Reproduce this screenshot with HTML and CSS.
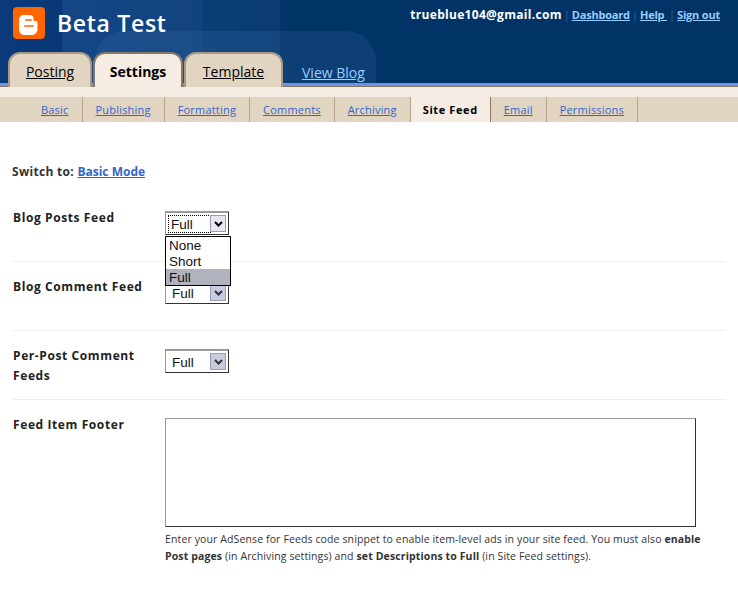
FILE: index.html
```html
<!DOCTYPE html>
<html lang="en">
<head>
  <meta charset="UTF-8" />
  <title>Blogger: Beta Test - Settings</title>
  <link rel="stylesheet" href="styles.css">
</head>
<body>
  <header class="top">
    <div class="glow glow-a"></div>
    <div class="glow glow-b"></div>
    <div class="stripe"></div>
    <div class="brand">
      <svg class="logo" width="32" height="32" viewBox="0 0 32 32">
        <rect width="32" height="32" rx="4" fill="#ff6600"/>
        <path d="M11 8h6c2 0 3.500 1.500 3.500 3.500v1c0 1 .5 1.500 1.500 1.500h1c1 0 1.500 .5 1.500 1.500V22c0 3.500-2.500 6-6 6h-7.500C8.500 28 6 25.500 6 22V13c0-3 2-5 5-5z" fill="#fff"/>
        <rect x="12" y="12" width="7" height="2" rx="1" fill="#ff8a3c"/>
        <rect x="11" y="18" width="10" height="2" rx="1" fill="#ff8a3c"/>
      </svg>
      <span class="blog-title">Beta Test</span>
    </div>
    <div class="account">
      <span class="email">trueblue104@gmail.com</span>
      <span class="sep">|</span><a href="#">Dashboard</a>
      <span class="sep">|</span><a href="#">Help </a>
      <span class="sep">|</span><a href="#">Sign out</a>
    </div>
    <nav class="tabs">
      <a class="tab" href="#">Posting</a>
      <a class="tab active" href="#">Settings</a>
      <a class="tab tab-template" href="#">Template</a>
      <a class="view-blog" href="#">View Blog</a>
    </nav>
  </header>

  <div class="strip"></div>

  <nav class="subnav">
    <a href="#" class="sub-basic">Basic</a>
    <a href="#">Publishing</a>
    <a href="#">Formatting</a>
    <a href="#">Comments</a>
    <a href="#">Archiving</a>
    <a href="#" class="current">Site Feed</a>
    <a href="#">Email</a>
    <a href="#">Permissions</a>
  </nav>

  <main class="content">
    <p class="switch">Switch to: <a href="#">Basic Mode</a></p>

    <div class="row">
      <div class="label">Blog Posts Feed</div>
      <div class="field">
        <div class="select focused">
          <span class="value">Full</span>
          <span class="arrow"><svg width="9" height="6" viewBox="0 0 9 6"><path d="M1 1l3.500 3.500L8 1" fill="none" stroke="#000" stroke-width="2"/></svg></span>
        </div>
        <ul class="menu">
          <li>None</li>
          <li>Short</li>
          <li class="picked">Full</li>
        </ul>
      </div>
    </div>

    <div class="row">
      <div class="label">Blog Comment Feed</div>
      <div class="field">
        <div class="select">
          <span class="value">Full</span>
          <span class="arrow"><svg width="9" height="6" viewBox="0 0 9 6"><path d="M1 1l3.500 3.500L8 1" fill="none" stroke="#333" stroke-width="2"/></svg></span>
        </div>
      </div>
    </div>

    <div class="row">
      <div class="label">Per-Post Comment Feeds</div>
      <div class="field">
        <div class="select">
          <span class="value">Full</span>
          <span class="arrow"><svg width="9" height="6" viewBox="0 0 9 6"><path d="M1 1l3.500 3.500L8 1" fill="none" stroke="#333" stroke-width="2"/></svg></span>
        </div>
      </div>
    </div>

    <div class="row last">
      <div class="label">Feed Item Footer</div>
      <div class="field">
        <div class="textarea"></div>
        <p class="hint">Enter your AdSense for Feeds code snippet to enable item-level ads in your site feed. You must also <b>enable Post pages</b> (in Archiving settings) and <b>set Descriptions to Full</b> (in Site Feed settings).</p>
      </div>
    </div>
  </main>
</body>
</html>
```

FILE: styles.css
```css
* {
  box-sizing: border-box;
}

body {
  margin: 0;
  font-family: 'Open Sans', sans-serif;
  background: #fff;
  color: #000;
  overflow: hidden;
}

.top {
  position: relative;
  height: 87px;
  background: linear-gradient(90deg, #0a3a7a 0, #003366 300px);
  overflow: hidden;
}

.stripe {
  position: absolute;
  left: 0;
  right: 0;
  bottom: 0;
  height: 4px;
  background: #6b95e8;
  border-bottom: 1px solid #8a7763;
}

.glow {
  position: absolute;
  background: rgba(70, 120, 190, 0.22);
  border-radius: 30px;
}

.glow-a {
  left: 62px;
  top: -30px;
  width: 140px;
  height: 150px;
  box-shadow: 78px 0 0 rgba(70, 120, 190, 0.12);
}

.glow-b {
  left: 95px;
  top: 31px;
  width: 281px;
  height: 100px;
  background: rgba(70, 120, 190, 0.18);
}

.brand {
  position: relative;
  display: flex;
  align-items: center;
  padding: 7px 0 0 13px;
  gap: 12px;
}

.blog-title {
  color: #fff;
  font-size: 23px;
  font-weight: 600;
  letter-spacing: 0.7px;
}

.account {
  position: absolute;
  top: 6px;
  right: 18px;
  display: flex;
  align-items: baseline;
  font-size: 11px;
  font-weight: 700;
  color: #fff;
}

.account a {
  color: #99ccff;
  white-space: pre;
  letter-spacing: -0.2px;
}

.account .email {
  font-size: 12px;
  letter-spacing: 0.3px;
}

.account .sep {
  color: #336699;
  font-weight: 400;
  margin: 0 2px;
}

.tabs {
  position: absolute;
  left: 8px;
  bottom: 0;
  display: flex;
  align-items: flex-end;
}

.tab {
  display: block;
  width: 84px;
  height: 35px;
  padding-top: 8px;
  margin-right: 1px;
  text-align: center;
  font-size: 14px;
  color: #000;
  background: #e1d4c0;
  border: 2px solid #a89a85;
  border-bottom: 0;
  border-radius: 12px 12px 0 0;
}

.tab.active {
  width: 90px;
  padding-top: 8px;
  font-weight: 700;
  text-decoration: none;
  background: #f5ede3;
  border-color: #8a7763;
}

.tab-template {
  width: 99px;
}

.view-blog {
  margin: 0 0 5px 18px;
  font-size: 14px;
  color: #99ccff;
}

.strip {
  height: 10px;
  background: #f5ede3;
}

.subnav {
  display: flex;
  height: 25px;
  background: #e1d4c0;
  font-size: 11px;
  line-height: 26px;
  letter-spacing: 0.2px;
}

.subnav a {
  padding: 0 13px;
  color: #3366cc;
  border-right: 1px solid #b8a48c;
}

.subnav .sub-basic {
  padding-left: 41px;
}

.subnav .current {
  padding: 0 12px;
  color: #000;
  font-weight: 700;
  letter-spacing: 0.6px;
  text-decoration: none;
  background: #f5ede3;
  border-right-color: #8a7763;
}

.content {
  padding: 42px 12px 0 13px;
  font-size: 12px;
}

.switch {
  margin: 0 0 13px -1px;
  font-weight: 700;
  letter-spacing: 0.3px;
  color: #333;
  line-height: 16px;
}

.switch a {
  color: #3366cc;
  letter-spacing: 0;
}

.row {
  display: flex;
  height: 69px;
  padding-top: 15px;
  border-bottom: 1px solid #eee;
}

.row.last {
  height: auto;
  border-bottom: 0;
  padding-top: 15px;
}

.label {
  width: 152px;
  padding-right: 20px;
  font-weight: 700;
  letter-spacing: 0.6px;
  line-height: 20px;
  color: #222;
}

.field {
  position: relative;
}

.select {
  display: flex;
  align-items: center;
  justify-content: space-between;
  width: 64px;
  height: 24px;
  padding: 0 2px 0 6px;
  margin-top: 3px;
  background: #fff;
  border: 1px solid #333;
  border-top: 2px solid #999;
  border-left-color: #999;
  font-family: 'Liberation Sans', sans-serif;
  font-size: 13.5px;
  color: #111;
}

.value {
  padding-top: 1px;
}

.focused .value {
  outline: 1px dotted #000;
  width: 41px;
  margin-left: -3px;
  padding-left: 2px;
}

.arrow {
  display: flex;
  align-items: center;
  justify-content: center;
  width: 16px;
  height: 17px;
  background: #c8cce0;
  border: 1px solid #9a9db5;
}

.focused .arrow {
  background: #e6e8f2;
}

.menu {
  position: absolute;
  z-index: 2;
  left: 0;
  top: 28px;
  width: 66px;
  margin: 0;
  padding: 0;
  list-style: none;
  background: #fff;
  border: 1px solid #000;
  font-family: 'Liberation Sans', sans-serif;
  font-size: 13.5px;
  color: #111;
}

.menu li {
  height: 16px;
  line-height: 18px;
  padding-left: 3px;
}

.menu .picked {
  background: #b0b2bd;
}

.textarea {
  width: 531px;
  height: 109px;
  margin-top: 3px;
  background: #fff;
  border: 1px solid #333;
  border-top-color: #999;
  border-left-color: #999;
}

.hint {
  width: 546px;
  margin: 4px 0 0 0;
  font-size: 10.5px;
  letter-spacing: 0.12px;
  line-height: 17px;
  color: #333;
}
```
